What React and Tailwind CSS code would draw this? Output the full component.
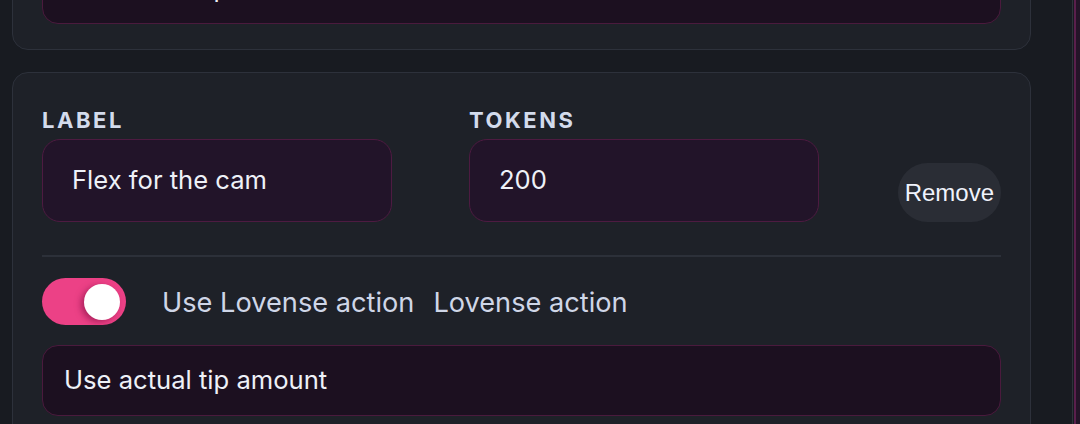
const rewards = [
  { label: "Tip menu", tokens: "100", action: "Use actual tip amount" },
  { label: "Flex for the cam", tokens: "200", action: "Use actual tip amount" },
];

function Field({ title, value }) {
  return (
    <div className="flex w-[350px] flex-col">
      <p className="text-[22px] font-bold uppercase leading-[30px] tracking-[0.115em] text-[#d3dbec]">
        {title}
      </p>
      <div className="mt-[4px] flex h-[83px] items-center rounded-[18px] border border-[#4d1b41] bg-[#221429] px-[29px] text-[25.6px] text-[#eef1f8]">
        {value}
      </div>
    </div>
  );
}

function RewardCard({ reward }) {
  const { label, tokens, action } = reward;

  return (
    <div className="rounded-[16px] border border-[#2d313b] bg-[#1e2128] px-[29px] pb-[25px] pt-[32px]">
      <div className="flex items-end gap-[77px]">
        <Field title="Label" value={label} />
        <Field title="Tokens" value={tokens} />
        <button className="ml-auto h-[59px] rounded-full bg-[#2a2d35] px-[7px] font-['Liberation_Sans',Arial,sans-serif] text-[24px] text-[#f0f3fc]">
          Remove
        </button>
      </div>

      <div className="mt-[33px] h-[2px] bg-[#2c3039]" />

      <div className="mt-[21px] flex items-center">
        <div className="flex h-[47px] w-[84px] items-center justify-end rounded-full bg-[#ec4186] pr-[6px]">
          <div className="h-[36px] w-[36px] rounded-full bg-white shadow-[-3px_2px_6px_rgba(120,10,60,0.55)]" />
        </div>
        <span className="ml-[36px] mt-[4px] text-[27.2px] text-[#cfd6e7]">
          Use Lovense action
        </span>
        <span className="ml-[19px] mt-[4px] text-[27.2px] text-[#cfd6e7]">
          Lovense action
        </span>
      </div>

      <div className="mt-[20px] flex h-[71px] items-center rounded-[16px] border border-[#4a1a3d] bg-[#1c1020] px-[21px] text-[25.6px] text-[#eef1f8]">
        {action}
      </div>
    </div>
  );
}

export default function App() {
  return (
    <div className="flex h-[424px] w-[1080px] overflow-hidden bg-[#181b21] font-['Inter','Noto_Sans',sans-serif]">
      <div className="flex-1 pl-3 pr-[41px]">
        <div className="-mt-[320px] flex flex-col gap-[22px]">
          {rewards.map((reward, idx) => (
            <RewardCard key={idx} reward={reward} />
          ))}
        </div>
      </div>
      <div className="flex w-[8px] border-l border-[#2e323b]">
        <div className="ml-[1px] w-[2px] bg-[#5a1f4c]" />
        <div className="flex-1 bg-[#241428]" />
      </div>
    </div>
  );
}
